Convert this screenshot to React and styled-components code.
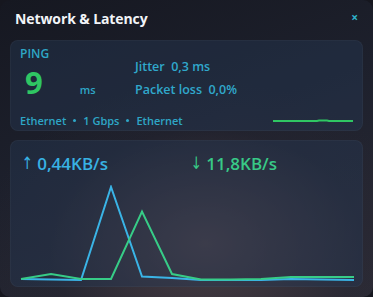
import React from "react";
import styled, { createGlobalStyle } from "styled-components";

const GlobalStyle = createGlobalStyle`
  html, body {
    margin: 0;
    padding: 0;
    background: #16171f;
  }
  body {
    font-family: "Open Sans", "Noto Sans", sans-serif;
  }
`;

const Window = styled.div`
  width: 373px;
  height: 297px;
  box-sizing: border-box;
  border-radius: 10px;
  overflow: hidden;
  display: flex;
  flex-direction: column;
  background:
    radial-gradient(ellipse 60% 55% at 55% 82%, rgba(84, 68, 72, 0.8), rgba(44, 40, 50, 0.25) 70%, transparent 100%),
    linear-gradient(160deg, #161821 0%, #1d202c 45%, #2b2b36 100%);
`;

const Header = styled.div`
  height: 36px;
  padding: 0 15px 0 15px;
  display: flex;
  align-items: center;
  justify-content: space-between;
  flex-shrink: 0;
`;

const Title = styled.h1`
  margin: 0;
  font-size: 14px;
  font-weight: 700;
  color: #f2f4f8;
  letter-spacing: -0.1px;
`;

const Close = styled.span`
  color: #2fb4cc;
  font-size: 12px;
  font-weight: 700;
  line-height: 1;
`;

const Card = styled.div`
  margin: 0 10px;
  border-radius: 8px;
  background: rgba(38, 58, 86, 0.42);
  border: 1px solid rgba(255, 255, 255, 0.03);
  box-sizing: border-box;
  height: ${({ $h }) => $h}px;
  flex-shrink: 0;
`;

const StatsCard = styled(Card)`
  margin-top: 4px;
  padding: 5px 9px 0 9px;
  display: grid;
  grid-template-columns: 115px 1fr;
  grid-template-rows: auto auto;
`;

const PingBlock = styled.div`
  display: flex;
  flex-direction: column;
`;

const Label = styled.div`
  font-size: 12px;
  font-weight: 600;
  color: #2ea6c6;
  line-height: 16px;
`;

const PingRow = styled.div`
  display: flex;
  align-items: baseline;
  padding-left: 5px;
  height: 40px;
`;

const PingValue = styled.span`
  font-size: 31px;
  font-weight: 700;
  color: #2fc663;
  line-height: 40px;
`;

const Unit = styled.span`
  font-size: 11px;
  font-weight: 600;
  color: #2ea6c6;
  margin-left: 37px;
`;

const Metrics = styled.div`
  display: flex;
  flex-direction: column;
  gap: 5px;
  padding-top: 12px;
`;

const Metric = styled.div`
  font-size: 12.5px;
  font-weight: 600;
  color: #30a8cc;
  line-height: 18px;
  white-space: pre;
`;

const Footer = styled.div`
  grid-column: 1 / span 2;
  display: flex;
  align-items: center;
  justify-content: space-between;
  margin-top: 6px;
`;

const Conn = styled.div`
  font-size: 11px;
  font-weight: 600;
  color: #2ea6c6;
  display: flex;
  align-items: center;
  gap: 7px;
`;

const Dot = styled.span`
  width: 3px;
  height: 3px;
  border-radius: 50%;
  background: #2ea6c6;
`;

const Spark = styled.svg`
  width: 80px;
  height: 8px;
  display: block;
`;

const TrafficCard = styled(Card)`
  margin-top: 9px;
  padding: 9px 9px 0 9px;
  display: flex;
  flex-direction: column;
`;

const Rates = styled.div`
  display: flex;
  align-items: center;
  height: 27px;
`;

const Rate = styled.div`
  width: ${({ $w }) => $w}px;
  font-size: 17px;
  font-weight: 600;
  color: ${({ $color }) => $color};
  display: flex;
  align-items: center;
  gap: 3px;
`;

const Arrow = styled.span`
  font-family: "DejaVu Sans", sans-serif;
  font-size: 17px;
  font-weight: 400;
  line-height: 1;
  transform: scaleX(0.8);
`;

const Chart = styled.svg`
  display: block;
  margin-top: 8px;
  width: 335px;
  height: 100px;
`;

const xs = [0, 30, 60, 90, 121, 151, 180, 210, 240, 270, 300, 333];
const up = [277, 277.5, 278, 185, 274.5, 276, 278, 278, 278, 277, 277.5, 278];
const down = [277, 272, 277, 277, 209.5, 272, 277.5, 277.5, 277, 275, 275, 275];

const toPoints = (vals) =>
  vals.map((v, i) => `${xs[i] + 1},${(v - 183).toFixed(1)}`).join(" ");

export default function App() {
  return (
    <>
      <GlobalStyle />
      <Window>
        <Header>
          <Title>Network &amp; Latency</Title>
          <Close>×</Close>
        </Header>

        <StatsCard $h={91}>
          <PingBlock>
            <Label>PING</Label>
            <PingRow>
              <PingValue>9</PingValue>
              <Unit>ms</Unit>
            </PingRow>
          </PingBlock>
          <Metrics>
            <Metric>{"Jitter  0,3 ms"}</Metric>
            <Metric>{"Packet loss  0,0%"}</Metric>
          </Metrics>
          <Footer>
            <Conn>
              Ethernet <Dot /> 1 Gbps <Dot /> Ethernet
            </Conn>
            <Spark viewBox="0 0 80 8">
              <polyline
                points="0,4 44,4 46,3.6 54,3.6 56,4 80,4"
                fill="none"
                stroke="#2fc663"
                strokeWidth="2"
              />
            </Spark>
          </Footer>
        </StatsCard>

        <TrafficCard $h={147}>
          <Rates>
            <Rate $w={169} $color="#38b2e4">
              <Arrow>↑</Arrow>0,44KB/s
            </Rate>
            <Rate $w={150} $color="#38c987">
              <Arrow>↓</Arrow>11,8KB/s
            </Rate>
          </Rates>
          <Chart viewBox="0 0 335 100">
            <polyline
              points={toPoints(up)}
              fill="none"
              stroke="#3ab4e6"
              strokeWidth="2"
            />
            <polyline
              points={toPoints(down)}
              fill="none"
              stroke="#37cc87"
              strokeWidth="2"
            />
          </Chart>
        </TrafficCard>
      </Window>
    </>
  );
}
